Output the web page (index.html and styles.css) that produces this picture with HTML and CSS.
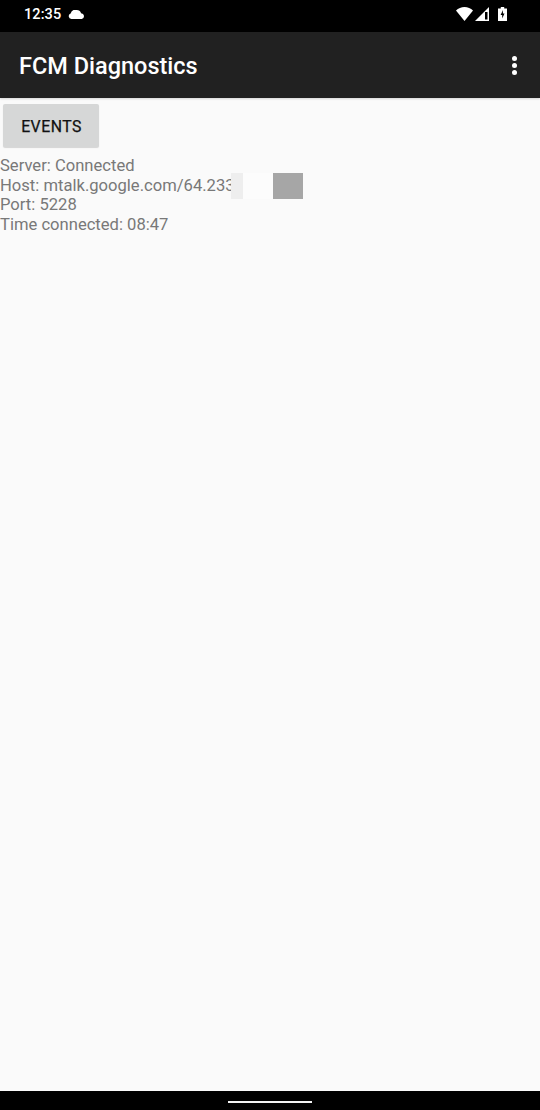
FILE: index.html
```html
<!DOCTYPE html>
<html lang="en">
<head>
<meta charset="utf-8">
<title>FCM Diagnostics</title>
<link rel="stylesheet" href="styles.css">
</head>
<body>
<div class="screen">
  <div class="status">
    <div class="status-left">
      <span class="clock">12:35</span>
      <svg class="cloud" width="17" height="9" viewBox="0 0 17 9"><path fill="#fff" d="M3.400 9a2.900 2.900 0 0 1-.8-5.600A5 5 0 0 1 8.500 0a4.800 4.800 0 0 1 4.600 3.200A2.950 2.950 0 0 1 13.800 9z"/></svg>
    </div>
    <div class="status-right">
      <svg class="wifi" width="17" height="14" viewBox="0 0 17 14"><path fill="#fff" d="M0 3.500C2.300 1.300 5.200 0 8.500 0s6.200 1.300 8.500 3.500L8.500 14z"/></svg>
      <svg width="14" height="14" viewBox="0 0 14 14"><path fill="#fff" d="M14 0v14H0z"/><path fill="#000" d="M10 5h2.500v7.500H10z"/></svg>
      <svg class="battery" width="9" height="14" viewBox="0 0 9 14"><path fill="#fff" d="M2.800 0h3.400v1.500H9V14H0V1.500h2.800z"/><path fill="#000" d="M5 3 2.600 8h1.600v3.500L6.500 6.500H4.900z"/></svg>
    </div>
  </div>
  <header class="toolbar">
    <h1 class="title">FCM Diagnostics</h1>
    <div class="overflow"><i></i><i></i><i></i></div>
  </header>
  <main class="content">
    <button class="events">EVENTS</button>
    <div class="info">
      <div>Server: Connected</div>
      <div class="host">Host: mtalk.google.com/64.233<span class="mask"><b class="m1"></b><b class="m2"></b><b class="m3"></b></span></div>
      <div>Port: 5228</div>
      <div>Time connected: 08:47</div>
    </div>
  </main>
  <div class="nav"><span class="handle"></span></div>
</div>
</body>
</html>
```
FILE: styles.css
```css
* { box-sizing: border-box; }
html, body { margin: 0; padding: 0; }
body { width: 540px; height: 1110px; overflow: hidden; font-family: Roboto, "Liberation Sans", sans-serif; }
.screen { width: 540px; height: 1110px; display: flex; flex-direction: column; background: #fafafa; }
.status { height: 32px; background: #000; display: flex; justify-content: space-between; align-items: center; padding: 0 33px 4px 24px; color: #fff; }
.status-left { display: flex; align-items: center; gap: 7px; }
.clock { font-size: 14.500px; font-weight: 500; letter-spacing: 0.1px; }
.status-right { display: flex; align-items: center; gap: 2px; }
.battery { margin-left: 7px; }
.toolbar { height: 66px; background: #212121; display: flex; justify-content: space-between; align-items: center; padding: 2px 23px 0 19px; box-shadow: 0 1px 2px rgba(0,0,0,.15); position: relative; }
.title { margin: 0; font-size: 23.500px; font-weight: 500; color: #fff; }
.overflow { display: flex; flex-direction: column; gap: 2px; margin-top: -2px; }
.overflow i { width: 5px; height: 5px; border-radius: 50%; background: #fff; display: block; }
.content { flex: 1; padding-top: 6px; }
.events { display: block; margin: 0 0 0 3px; width: 96px; height: 43px; border: 0; border-radius: 2px; background: #d6d7d7; color: #111; font-family: Roboto, sans-serif; font-size: 15.800px; font-weight: 400; letter-spacing: 0.5px; -webkit-text-stroke: 0.25px #111; box-shadow: 0 1px 1px rgba(0,0,0,.15); padding: 1px 0 0 1px; }
.info { margin-top: 9px; font-size: 16.600px; line-height: 19.500px; color: #787878; }
.host { position: relative; overflow: visible; }
.mask { position: absolute; left: 231px; top: -3px; height: 26px; display: flex; }
.mask b { display: block; height: 26px; }
.m1 { width: 12px; background: #eeeeee; }
.m2 { width: 30px; background: #fcfcfc; }
.m3 { width: 30px; background: #a6a6a6; }
.nav { height: 19px; background: #000; display: flex; justify-content: center; padding-top: 10px; }
.handle { width: 84px; height: 2px; background: #f2f2f2; }
```
